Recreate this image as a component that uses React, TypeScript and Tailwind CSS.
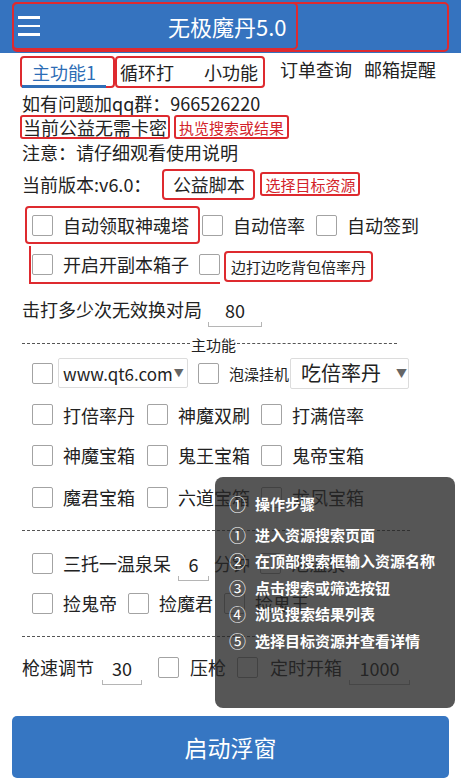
import type { ReactNode } from 'react';

const red = 'border-2 border-[#de2a2f]';

function Check({ className = '' }: { className?: string }) {
  return <span className={`inline-block h-[21px] w-[21px] shrink-0 rounded-[2px] border-[1.5px] border-[#a3a3a3] bg-white ${className}`} />;
}

function Item({ label, className = '' }: { label: string; className?: string }) {
  return (
    <span className={`flex items-center ${className}`}>
      <Check />
      <span className="ml-[10px]">{label}</span>
    </span>
  );
}

// underlined number field, android style
function Field({ value, width, className = '' }: { value: string; width: string; className?: string }) {
  return (
    <span className={`flex flex-col items-center ${width} ${className}`}>
      <span className="leading-[22px]">{value}</span>
      <span className="mt-[1px] h-[5px] w-full border-x border-b border-[#b5b5b5]" />
    </span>
  );
}

function Dashes({ label, className = 'h-[24px]' }: { label?: ReactNode; className?: string }) {
  if (label) {
    return (
      <div className={`flex items-center pl-[22px] ${className}`}>
        <div className="h-0 w-[168px] border-t border-dashed border-[#555]" />
        <span className="px-[1px] pt-[3px] text-[15px] leading-none">{label}</span>
        <div className="h-0 w-[160px] border-t border-dashed border-[#555]" />
      </div>
    );
  }
  return (
    <div className={`flex items-center pl-[22px] pr-[51px] ${className}`}>
      <div className="h-0 flex-1 border-t border-dashed border-[#555]" />
    </div>
  );
}

const steps = [
  ['①', '进入资源搜索页面'],
  ['②', '在顶部搜索框输入资源名称'],
  ['③', '点击搜索或筛选按钮'],
  ['④', '浏览搜索结果列表'],
  ['⑤', '选择目标资源并查看详情'],
];

export default function App() {
  return (
    <div className="relative h-[780px] w-[461px] overflow-hidden bg-white font-['Noto_Sans_CJK_SC','Noto_Sans',sans-serif] text-[18px] text-[#222]">
      {/* Title bar */}
      <header className="h-[53px] bg-[#3573bf] px-[12px] pt-[2px]">
        <div className={`h-[50px] rounded-[5px] ${red}`}>
          <div className={`-m-[2px] flex h-[48px] w-[286px] items-center rounded-[5px] ${red}`}>
            <div className="ml-[4px] flex w-[22px] flex-col gap-[6px]">
              <span className="h-[2.5px] bg-white" />
              <span className="h-[2.5px] bg-white" />
              <span className="h-[2.5px] bg-white" />
            </div>
            <span className="ml-[128px] text-[22px] leading-none text-white">无极魔丹5.0</span>
          </div>
        </div>
      </header>

      {/* Tabs */}
      <nav className="flex h-[37px] items-end pb-[2px] pl-[20px]">
        <div className={`relative flex h-[32px] w-[95px] items-center rounded-[4px] ${red}`}>
          <span className="ml-[10px] text-[#2d6db5]">主功能1</span>
          <span className="absolute -bottom-[2px] left-0 h-[3px] w-[84px] bg-[#2f6fb8]" />
        </div>
        <div className={`flex h-[32px] w-[150px] items-center rounded-[4px] ${red}`}>
          <span className="ml-[3px]">循环打</span>
          <span className="ml-[30px]">小功能</span>
        </div>
        <span className="mb-[5px] ml-[15px]">订单查询</span>
        <span className="mb-[5px] ml-[12px]">邮箱提醒</span>
      </nav>

      <div className="flex h-[25px] items-center pl-[22px] leading-none">如有问题加qq群：966526220</div>

      <div className="flex h-[24px] items-center gap-[4px] pl-[20px] leading-none">
        <span className={`flex h-[24px] items-center rounded-[3px] px-[1px] ${red}`}>当前公益无需卡密</span>
        <span className={`flex h-[24px] items-center rounded-[3px] px-[3px] text-[15px] text-[#d3232a] ${red}`}>执览搜索或结果</span>
      </div>

      <div className="flex h-[25px] items-center pl-[22px] leading-none">注意：请仔细观看使用说明</div>

      <div className="flex h-[40px] items-center pl-[22px] leading-none">
        <span>当前版本:v6.0：</span>
        <span className={`ml-[11px] flex h-[31px] w-[93px] items-center justify-center rounded-[4px] ${red}`}>公益脚本</span>
        <span className={`ml-[5px] flex h-[24px] items-center rounded-[3px] px-[3px] text-[15px] text-[#d3232a] ${red}`}>选择目标资源</span>
      </div>

      {/* Toggles */}
      <div className="flex h-[42px] items-center pl-[25px] leading-none">
        <div className={`flex h-[38px] w-[175px] items-center rounded-[4px] pl-[5px] ${red}`}>
          <Item label="自动领取神魂塔" />
        </div>
        <Item label="自动倍率" className="ml-[2px]" />
        <Item label="自动签到" className="ml-[11px]" />
      </div>

      <div className="flex h-[40px] items-center pl-[29px] leading-none">
        <div className="flex h-[38px] w-[191px] items-center self-start border-b-2 border-l-2 border-[#de2a2f] pl-[1px]">
          <Item label="开启开副本箱子" />
          <Check className="ml-[10px]" />
        </div>
        <span className={`ml-[4px] flex h-[31px] items-center rounded-[4px] px-[5px] text-[15px] ${red}`}>边打边吃背包倍率丹</span>
      </div>

      <div className="flex h-[44px] items-center pl-[22px] pt-[2px] leading-none">
        <span>击打多少次无效换对局</span>
        <Field value="80" width="w-[54px]" className="ml-[6px] mt-[8px]" />
      </div>

      <Dashes label="主功能" className="h-[26px]" />

      {/* Main features */}
      <div className="flex h-[34px] items-center pl-[32px] leading-none">
        <Check />
        <span className="ml-[5px] flex h-[30px] w-[130px] items-center rounded-[2px] border border-[#dcdcdc] pl-[4px] text-[17px]">
          www.qt6.com<span className="ml-[1px] text-[10px] text-[#666]">▼</span>
        </span>
        <Check className="ml-[10px]" />
        <span className="ml-[10px] text-[15px]">泡澡挂机</span>
        <span className="ml-[1px] flex h-[31px] w-[119px] items-center whitespace-nowrap rounded-[2px] border border-[#dcdcdc] pl-[10px] text-[20px]">
          吃倍率丹<span className="ml-[15px] text-[11px] text-[#666]">▼</span>
        </span>
      </div>

      <div className="flex flex-col pl-[32px] leading-none">
        {[
          ['打倍率丹', '神魔双刷', '打满倍率'],
          ['神魔宝箱', '鬼王宝箱', '鬼帝宝箱'],
          ['魔君宝箱', '六道宝箱', '龙凤宝箱'],
        ].map((row, i) => (
          <div key={i} className={`flex items-center ${i === 0 ? 'h-[44px] pt-[5px]' : 'h-[42px]'}`}>
            <Item label={row[0]} />
            <Item label={row[1]} className="ml-[12px]" />
            <Item label={row[2]} className="ml-[11px]" />
          </div>
        ))}
      </div>

      <Dashes />

      <div className="flex h-[42px] items-center pl-[32px] leading-none">
        <Item label="三托一温泉呆" />
        <Field value="6" width="w-[31px]" className="ml-[7px] mt-[8px]" />
        <span className="ml-[5px]">分钟</span>
        <Check className="ml-[10px]" />
        <span className="ml-[10px]">泡温泉</span>
      </div>

      <div className="flex h-[38px] items-center pl-[32px] leading-none">
        <Item label="捡鬼帝" />
        <Item label="捡魔君" className="ml-[11px]" />
        <Item label="捡鬼王" className="ml-[11px]" />
      </div>

      <div className="h-[2px]" />
      <Dashes />

      <div className="flex h-[38px] items-center pl-[22px] leading-none">
        <span>枪速调节</span>
        <Field value="30" width="w-[40px]" className="ml-[8px] mt-[8px]" />
        <Check className="ml-[16px]" />
        <span className="ml-[11px]">压枪</span>
        <Check className="ml-[11px]" />
        <span className="ml-[12px]">定时开箱</span>
        <Field value="1000" width="w-[61px]" className="ml-[7px] mt-[8px]" />
      </div>

      <div className="px-[12px] pt-[30px]">
        <button
          type="button"
          className="flex h-[62px] w-full items-center justify-center rounded-[5px] bg-[#3676c2] text-[23px] text-white"
        >
          启动浮窗
        </button>
      </div>

      {/* Steps popup */}
      <div className="absolute left-[215px] top-[477px] h-[231px] w-[240px] rounded-[8px] bg-[rgba(38,38,38,0.78)] pl-[14px] pt-[14px] text-[15px] font-semibold leading-none text-white">
        <div className="flex h-[24px] items-center">
          <span className="w-[26px] text-[17px] font-normal">①</span>
          <span>操作步骤</span>
        </div>
        <div className="mt-[6px] flex flex-col">
          {steps.map(([n, t]) => (
            <div key={t} className="flex h-[26.5px] items-center">
              <span className="w-[26px] text-[17px] font-normal">{n}</span>
              <span>{t}</span>
            </div>
          ))}
        </div>
      </div>
    </div>
  );
}
